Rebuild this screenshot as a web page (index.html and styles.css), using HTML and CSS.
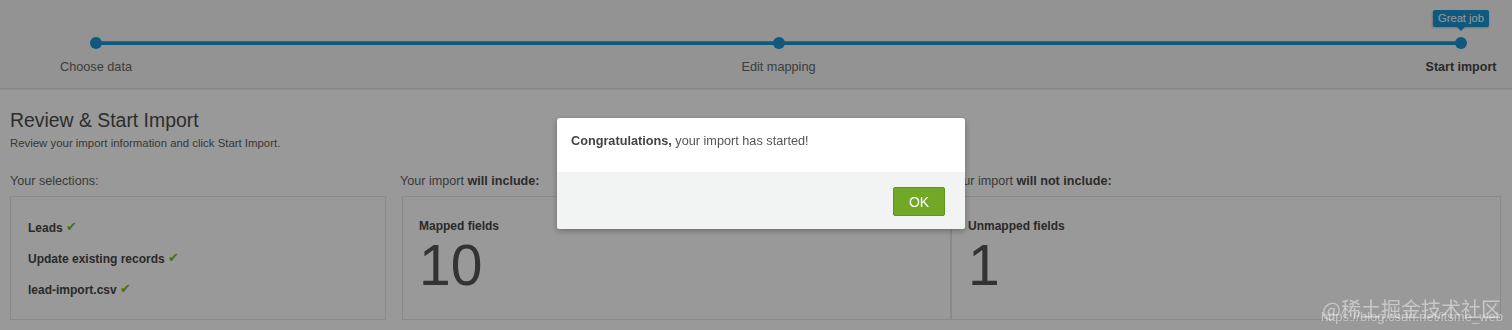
FILE: index.html
```html
<!DOCTYPE html>
<html lang="en">

<head>
    <meta charset="UTF-8">
    <meta name="viewport" content="width=device-width, initial-scale=1.0">
    <title>Review &amp; Start Import</title>
    <link rel="stylesheet" href="styles.css">
</head>

<body>
    <div class="steps">
        <div class="track">
            <div class="step">
                <span class="dot"></span>
                <span class="label">Choose data</span>
            </div>
            <div class="step">
                <span class="dot"></span>
                <span class="label">Edit mapping</span>
            </div>
            <div class="step current">
                <span class="tip">Great job</span>
                <span class="dot"></span>
                <span class="label">Start import</span>
            </div>
        </div>
    </div>

    <div class="page">
        <h1 class="title">Review &amp; Start Import</h1>
        <p class="lead">Review your import information and click Start Import.</p>

        <div class="columns">
            <div class="col col-sel">
                <div class="col-head">Your selections:</div>
                <div class="box">
                    <div class="item">Leads <span class="check">&#10004;</span></div>
                    <div class="item">Update existing records <span class="check">&#10004;</span></div>
                    <div class="item">lead-import.csv <span class="check">&#10004;</span></div>
                </div>
            </div>
            <div class="col col-in">
                <div class="col-head">Your import <b>will include:</b></div>
                <div class="box">
                    <div class="stat-name">Mapped fields</div>
                    <div class="stat-num">10</div>
                </div>
            </div>
            <div class="col col-out">
                <div class="col-head">Your import <b>will not include:</b></div>
                <div class="box">
                    <div class="stat-name">Unmapped fields</div>
                    <div class="stat-num">1</div>
                </div>
            </div>
        </div>
    </div>

    <div class="backdrop"></div>

    <div class="modal">
        <div class="modal-body">
            <b>Congratulations,</b> your import has started!
        </div>
        <div class="modal-foot">
            <button class="ok">OK</button>
        </div>
    </div>

    <div class="watermark">
        <div class="wm-site">@稀土掘金技术社区</div>
        <div class="wm-url">https://blog.csdn.net/itsme_web</div>
    </div>
</body>

</html>
```

FILE: styles.css
```css
body {
    margin: 0;
    padding: 0;
    background-color: #ffffff;
    font-family: 'Liberation Sans', Arial, sans-serif;
    color: #4d4d4d;
    height: 330px;
    overflow: hidden;
}

.steps {
    height: 88px;
    background-color: #f5f5f5;
    box-shadow: 0 1px 2px rgba(0, 0, 0, 0.18);
}

.track {
    position: relative;
    display: flex;
    justify-content: space-between;
    margin-left: 46px;
    width: 1465px;
}

.track::before {
    content: "";
    position: absolute;
    left: 50px;
    right: 50px;
    top: 41px;
    height: 3px;
    background-color: #1a94d4;
    border-top: 1px solid #4fb0e2;
}

.step {
    position: relative;
    width: 100px;
    display: flex;
    flex-direction: column;
    align-items: center;
    padding-top: 37px;
}

.dot {
    position: relative;
    width: 12px;
    height: 12px;
    border-radius: 50%;
    background-color: #1a94d4;
}

.label {
    margin-top: 10px;
    font-size: 12.7px;
    line-height: 16px;
    color: #666666;
    white-space: nowrap;
}

.current .label {
    font-weight: bold;
    font-size: 12.5px;
    color: #474747;
}

.tip {
    position: absolute;
    top: 10px;
    left: 50%;
    transform: translateX(-50%);
    height: 17px;
    padding: 0 5px;
    font-size: 11.2px;
    line-height: 17px;
    color: #ffffff;
    background-color: #1a94d4;
    border-radius: 2px;
    white-space: nowrap;
    box-shadow: 0 1px 2px rgba(0, 0, 0, 0.2);
}

.tip::after {
    content: "";
    position: absolute;
    left: 50%;
    bottom: -4px;
    margin-left: -4px;
    border-left: 4px solid transparent;
    border-right: 4px solid transparent;
    border-top: 4px solid #1a94d4;
}

.page {
    padding: 0 10px;
}

.title {
    margin: 20px 0 0;
    font-size: 19.4px;
    line-height: 24px;
    font-weight: normal;
    color: #4b4b4b;
}

.lead {
    margin: 4px 0 0;
    font-size: 11.4px;
    line-height: 14px;
    color: #5e5e5e;
}

.columns {
    display: flex;
    margin-top: 23px;
}

.col-sel {
    width: 376px;
    margin-right: 16px;
}

.col-in {
    width: 549px;
}

.col-out {
    width: 550px;
}

.col-head {
    font-size: 12.6px;
    line-height: 16px;
    color: #626262;
    margin-bottom: 7px;
}

.col-in .col-head,
.col-out .col-head {
    margin-left: -2px;
}

.col-head b {
    color: #4a4a4a;
}

.box {
    height: 122px;
    border: 1px solid #e6e6e6;
    padding: 0 16px;
}

.col-sel .box {
    padding: 24px 17px 0;
    height: 98px;
}

.item {
    font-size: 12px;
    line-height: 14px;
    font-weight: bold;
    color: #464646;
    margin-bottom: 17px;
}

.check {
    font-family: 'DejaVu Sans', sans-serif;
    font-size: 13px;
    line-height: 12px;
    color: #7cbc1c;
    vertical-align: 1px;
}

.col-in .box,
.col-out .box {
    padding-top: 22px;
    height: 100px;
}

.stat-name {
    font-size: 12px;
    line-height: 14px;
    font-weight: bold;
    color: #464646;
}

.stat-num {
    margin-top: 4px;
    font-size: 57px;
    line-height: 57px;
    color: #555555;
}

.backdrop {
    position: fixed;
    left: 0;
    top: 0;
    right: 0;
    bottom: 0;
    background-color: rgba(0, 0, 0, 0.4);
}

.modal {
    position: fixed;
    left: 557px;
    top: 118px;
    width: 408px;
    border-radius: 3px;
    overflow: hidden;
    background-color: #ffffff;
    box-shadow: 0 2px 6px rgba(0, 0, 0, 0.3);
}

.modal-body {
    height: 54px;
    padding: 15px 14px 0;
    box-sizing: border-box;
    font-size: 12.7px;
    line-height: 16px;
    color: #555555;
}

.modal-body b {
    color: #444444;
}

.modal-foot {
    height: 57px;
    padding: 15px 20px 0;
    box-sizing: border-box;
    background-color: #f1f4f3;
    display: flex;
    justify-content: flex-end;
    align-items: flex-start;
}

.ok {
    width: 52px;
    height: 29px;
    border: 1px solid #5f951c;
    border-radius: 2px;
    background-color: #71a826;
    color: #ffffff;
    font-family: 'Liberation Sans', Arial, sans-serif;
    font-size: 14px;
    cursor: pointer;
}

.watermark {
    position: fixed;
    right: 9px;
    bottom: 6px;
    text-align: right;
    color: rgba(255, 255, 255, 0.45);
}

.wm-site {
    font-family: 'Noto Sans CJK SC', sans-serif;
    font-size: 20px;
    line-height: 20px;
    margin-right: 2px;
}

.wm-url {
    margin-top: -9px;
    font-family: 'Liberation Sans', Arial, sans-serif;
    font-size: 13px;
    line-height: 14px;
}
```
